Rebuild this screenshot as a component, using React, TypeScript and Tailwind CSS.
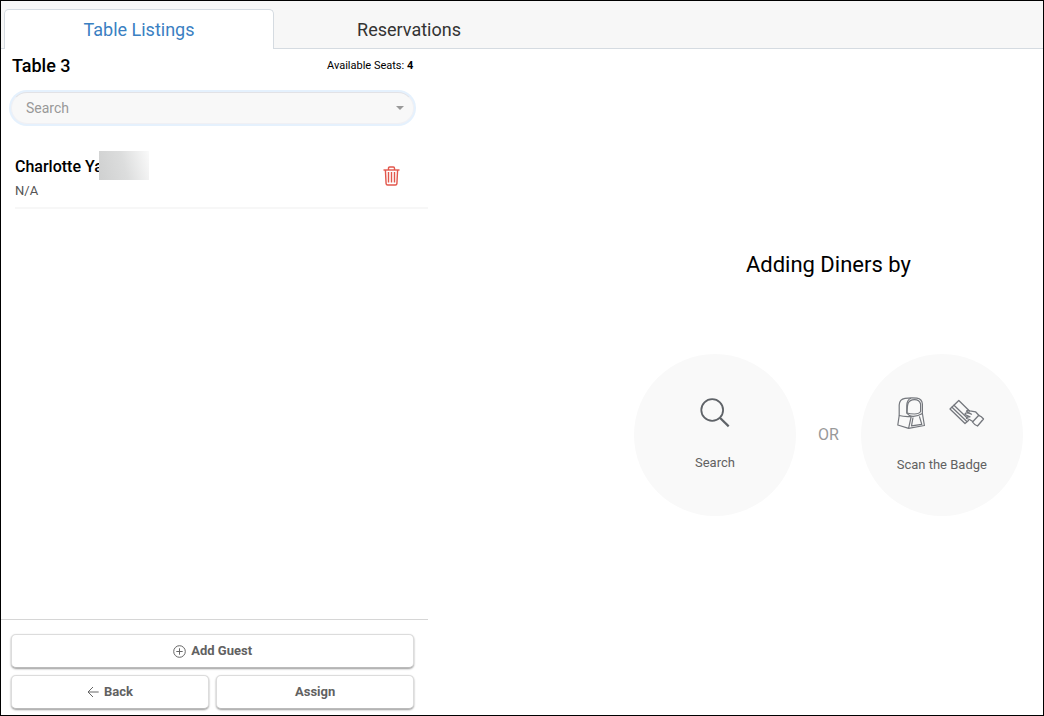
import React, { useState } from 'react';

interface Guest {
  id: number;
  name: string;
  note: string;
}

const initialGuests: Guest[] = [{ id: 1, name: 'Charlotte Ya', note: 'N/A' }];

const tabs = ['Table Listings', 'Reservations'];

function TrashIcon() {
  return (
    <svg width="17" height="20" viewBox="0 0 17 20" fill="none" stroke="#e2574c" strokeWidth="1.4">
      <path d="M0.5 4h16" />
      <path d="M5.5 4V2.2Q5.5 1 6.7 1h3.6q1.2 0 1.2 1.2V4" />
      <path d="M2.4 4l.7 13.6q.1 1.4 1.5 1.4h7.8q1.4 0 1.5-1.4L14.600 4" />
      <path d="M5.500 6v10.500M8.500 6v10.500M11.500 6v10.500" />
    </svg>
  );
}

function SearchIcon() {
  return (
    <svg width="30" height="30" viewBox="0 0 30 30" fill="none" stroke="#5f6368" strokeWidth="1.8">
      <circle cx="12.2" cy="12" r="10.9" />
      <path d="M19.9 19.8l8.8 8.6" strokeWidth="2.2" />
    </svg>
  );
}

function ScannerIcon() {
  return (
    <svg width="28" height="33" viewBox="0 0 28 33" fill="none" stroke="#74777d" strokeWidth="1.2" strokeLinejoin="round">
      <path d="M2.2 18.5V8Q2.500 2.200 8 1.400Q14 .600 20 1.200Q25 2 25.400 7V17.500" />
      <path d="M9.800 16.500V8.500Q10 2.500 14 1.200" />
      <path d="M10 16Q10.200 9 11 6.500Q12.500 2.600 17.500 2.600T23.600 7V14.500Q22 17 17.500 17T10 16Z" />
      <path d="M2.200 18.500L.8 28L11.600 31.400L14.200 19.500Q7 20 2.200 18.500Z" />
      <path d="M10 16Q12 19.500 16.500 19.300T25.400 16.500L27.400 28.500L11.600 31.400" />
      <path d="M16 20.500L14.500 28.800L24.800 27.300L22.400 19.300" />
    </svg>
  );
}

function SwipeIcon() {
  return (
    <svg width="36" height="29" viewBox="0 0 36 29" fill="none" stroke="#74777d" strokeWidth="1.3" strokeLinejoin="round" strokeLinecap="round">
      <path d="M19.500 21.500L16 24.500L1 10L9.800 1.500L20.500 12" />
      <path d="M3 8.200L17.800 22.500M5 6.300L18 18.700" />
      <path d="M23.800 22.500L20.500 20.500L17.500 19.500Q17.200 17.500 21 17.800L16 15.500Q16 13.500 19 14L22.500 15.200L17.500 12.300Q18 11 21 11.800L26.500 12.800L30 16.500" />
      <path d="M29.800 16.300Q32.500 17.200 34.500 20L28.500 27Q25.500 26 23.500 23Z" />
    </svg>
  );
}

function PlusCircleIcon() {
  return (
    <svg width="13" height="13" viewBox="0 0 13 13" fill="none" stroke="#666" strokeWidth="1">
      <circle cx="6.5" cy="6.5" r="5.8" />
      <path d="M6.5 3.3v6.4M3.3 6.5h6.4" />
    </svg>
  );
}

function BackIcon() {
  return (
    <svg width="12" height="12" viewBox="0 0 12 12" fill="none" stroke="#666" strokeWidth="1">
      <path d="M11.7 6H1M6 1L1 6l5 5" />
    </svg>
  );
}

const buttonClass =
  'flex h-[34px] items-center justify-center gap-[5px] rounded-[5px] border border-[#dcdcdc] border-b-[#bbb] bg-white text-[13px] font-bold text-[#616161] shadow-[0_1px_2px_rgba(0,0,0,0.4)]';

const circleClass =
  'flex size-[162px] flex-col items-center justify-start rounded-full bg-[#f9f9f9] text-[13px] leading-5 text-[#616161]';

export default function App() {
  const [activeTab, setActiveTab] = useState('Table Listings');
  const [guests, setGuests] = useState(initialGuests);
  const [query, setQuery] = useState('');

  return (
    <div className="flex min-h-screen flex-col border border-black bg-white font-[Roboto,sans-serif] text-black">
      <header className="border-b border-[#d5dbe1] bg-[#f7f7f7] px-[3px] pt-2">
        <nav role="tablist" className="-mb-px flex">
          {tabs.map((tab) => (
            <button
              key={tab}
              type="button"
              role="tab"
              aria-selected={activeTab === tab}
              onClick={() => setActiveTab(tab)}
              className={`h-10 w-[270px] rounded-t-[5px] border border-b-0 text-lg ${
                activeTab === tab ? 'border-[#d5dbe1] bg-white text-[#3a80c2]' : 'border-transparent text-[#333]'
              }`}
            >
              {tab}
            </button>
          ))}
        </nav>
      </header>

      <main className="flex flex-1 justify-between">
        <section className="flex w-[41%] flex-col">
          <div className="flex h-[34px] items-center justify-between pr-[15px] pl-[11px]">
            <h1 className="text-lg font-medium">Table 3</h1>
            <p className="text-[11px]">
              Available Seats: <strong className="font-bold">4</strong>
            </p>
          </div>

          <div className="mt-[9px] mr-[14px] ml-[10px] flex h-8 items-center rounded-full border border-t-[#e2e2e6] border-r-[#f0f0f4] border-b-[#f0f0f4] border-l-[#f0f0f4] bg-[#f8f8f8] pr-[5px] pl-[14px] ring-2 ring-[#e5f1fd]">
            <input
              type="text"
              aria-label="Search"
              placeholder="Search"
              value={query}
              onChange={(e) => setQuery(e.target.value)}
              className="min-w-0 flex-1 bg-transparent text-sm text-[#333] outline-none placeholder:text-[#999]"
            />
            <button type="button" aria-label="Show diners" className="flex w-4 justify-center">
              <svg width="8" height="4" viewBox="0 0 8 4" fill="#999">
                <path d="M0 0h8L4 4z" />
              </svg>
            </button>
          </div>

          <ul className="mt-[25px] flex-1">
            {guests.map((guest) => (
              <li key={guest.id} className="ml-[14px] flex items-center justify-between border-b-2 border-[#f7f7f7] pt-[6px] pr-7 pb-1">
                <div>
                  <div className="relative text-base leading-6 font-medium">
                    {guest.name}
                    <span className="absolute -top-1 left-[84px] h-[29px] w-[50px] bg-[linear-gradient(75deg,#cfd0d0,#dcdddd_50%,#fafafa)]" />
                  </div>
                  <div className="text-[13px] leading-6 text-[#555]">{guest.note}</div>
                </div>
                <button
                  type="button"
                  aria-label={`Remove ${guest.name}`}
                  onClick={() => setGuests(guests.filter((g) => g.id !== guest.id))}
                  className="pb-[6px]"
                >
                  <TrashIcon />
                </button>
              </li>
            ))}
          </ul>

          <div className="flex flex-col gap-[7px] border-t border-[#d6d6d6] pt-[14px] pr-[14px] pb-[6px] pl-[10px]">
            <button type="button" className={buttonClass}>
              <PlusCircleIcon />
              Add Guest
            </button>
            <div className="grid grid-cols-2 gap-[7px]">
              <button type="button" className={buttonClass}>
                <BackIcon />
                Back
              </button>
              <button type="button" className={buttonClass}>
                Assign
              </button>
            </div>
          </div>
        </section>

        <section className="flex w-[41%] flex-col items-center justify-center pt-[2px] pr-[2px]">
          <h2 className="mb-[74px] text-[22px] leading-[30px]">Adding Diners by</h2>
          <div className="flex items-center gap-[22px]">
            <button type="button" className={`${circleClass} gap-[25px] pt-11`}>
              <SearchIcon />
              <span>Search</span>
            </button>
            <span className="text-base text-[#999]">OR</span>
            <button type="button" className={`${circleClass} gap-[25px] pt-[43px]`}>
              <span className="flex items-center gap-6 pr-[2px]">
                <ScannerIcon />
                <SwipeIcon />
              </span>
              <span>Scan the Badge</span>
            </button>
          </div>
        </section>
      </main>
    </div>
  );
}
